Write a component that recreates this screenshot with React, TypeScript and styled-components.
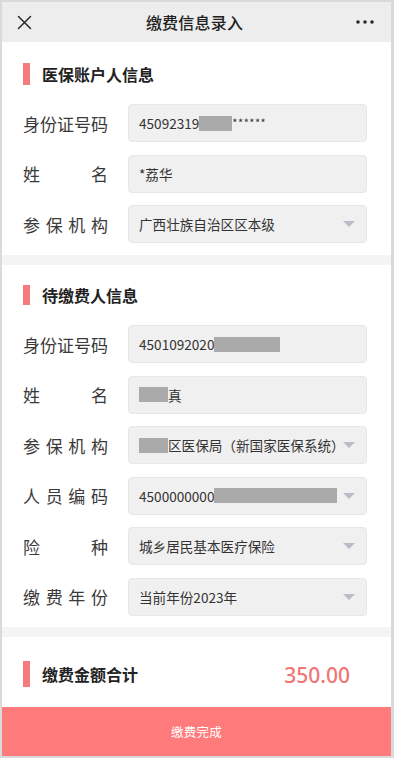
import styled, { createGlobalStyle } from 'styled-components'

const GlobalStyle = createGlobalStyle`
  html, body {
    margin: 0;
    padding: 0;
    background: #ffffff;
  }
  body {
    font-family: "Noto Sans CJK SC", "Noto Sans", sans-serif;
    color: #333333;
  }
  * {
    box-sizing: border-box;
  }
`

const Frame = styled.div`
  width: 394px;
  height: 758px;
  border: 2px solid #dadada;
  border-right-width: 3px;
  display: flex;
  flex-direction: column;
  background: #ffffff;
  overflow: hidden;
`

const NavBar = styled.header`
  height: 40px;
  flex: none;
  background: #ededed;
  display: flex;
  align-items: center;
  justify-content: space-between;
  padding: 0 14px 0 10px;
`

const NavTitle = styled.h1`
  margin: 0;
  font-size: 16px;
  font-weight: 500;
  color: #222222;
  letter-spacing: 0.2px;
`

const IconButton = styled.button`
  width: 24px;
  height: 24px;
  padding: 0;
  border: 0;
  background: none;
  display: flex;
  align-items: center;
  justify-content: center;
  color: #2a2a2a;
`

const Section = styled.section<{ $top: number; $bottom: number }>`
  background: #ffffff;
  padding: ${(p) => p.$top}px 24px ${(p) => p.$bottom}px 21px;
  display: flex;
  flex-direction: column;
`

const Divider = styled.div`
  height: 10px;
  flex: none;
  background: #f4f4f4;
`

const SectionTitle = styled.div<{ $bar: number }>`
  display: flex;
  align-items: center;
  gap: 12px;
  height: ${(p) => p.$bar}px;
  font-size: 16px;
  font-weight: 700;
  color: #222222;
  &::before {
    content: '';
    width: 7px;
    height: ${(p) => p.$bar}px;
    background: #f57b7b;
    flex: none;
  }
`

const Rows = styled.div<{ $top: number }>`
  display: flex;
  flex-direction: column;
  gap: 12.5px;
  margin-top: ${(p) => p.$top}px;
`

const Row = styled.div`
  display: flex;
  align-items: center;
  gap: 20px;
`

const Label = styled.span`
  width: 85px;
  flex: none;
  font-size: 17px;
  color: #3a3a3a;
  text-align: justify;
  text-align-last: justify;
  white-space: nowrap;
`

const Field = styled.div<{ $select?: boolean }>`
  position: relative;
  flex: 1;
  height: 38px;
  background: #f0f0f0;
  border: 1px solid #e7e7e7;
  border-radius: 4px;
  display: flex;
  align-items: center;
  padding: 0 ${(p) => (p.$select ? 26 : 10)}px 0 10px;
  font-size: 13.6px;
  color: #333333;
  white-space: nowrap;
  overflow: hidden;
`

const Caret = styled.span`
  position: absolute;
  right: 11px;
  top: 50%;
  margin-top: -3px;
  width: 0;
  height: 0;
  border-left: 6px solid transparent;
  border-right: 6px solid transparent;
  border-top: 6px solid #bcbcc7;
`

const Mask = styled.span<{ $w: number }>`
  display: inline-block;
  width: ${(p) => p.$w}px;
  height: 15px;
  background: #aaaaaa;
  flex: none;
`

const Stars = styled.span`
  font-size: 11px;
  letter-spacing: 0.5px;
  align-self: flex-start;
  margin-top: 9px;
`

const TotalRow = styled.div`
  display: flex;
  align-items: center;
  justify-content: space-between;
  padding-right: 17px;
`

const Amount = styled.span`
  font-family: "Noto Sans", "Open Sans", sans-serif;
  font-size: 21px;
  font-weight: 500;
  color: #f07676;
  margin-top: 2px;
`

const SubmitButton = styled.button`
  flex: 1;
  border: 0;
  background: #ff7b7b;
  color: #ffffff;
  font-family: "Noto Sans CJK SC", sans-serif;
  font-size: 12.5px;
  letter-spacing: 0.3px;
`

type FieldRow = {
  label: string
  value: React.ReactNode
  select?: boolean
}

const accountRows: FieldRow[] = [
  {
    label: '身份证号码',
    value: (
      <>
        45092319
        <Mask $w={33} />
        <Stars>******</Stars>
      </>
    ),
  },
  { label: '姓名', value: '*荔华' },
  { label: '参保机构', value: '广西壮族自治区区本级', select: true },
]

const payerRows: FieldRow[] = [
  {
    label: '身份证号码',
    value: (
      <>
        4501092020
        <Mask $w={66} />
      </>
    ),
  },
  {
    label: '姓名',
    value: (
      <>
        <Mask $w={29} />真
      </>
    ),
  },
  {
    label: '参保机构',
    value: (
      <>
        <Mask $w={29} />区医保局（新国家医保系统）
      </>
    ),
    select: true,
  },
  {
    label: '人员编码',
    value: (
      <>
        4500000000
        <Mask $w={123} />
      </>
    ),
    select: true,
  },
  { label: '险种', value: '城乡居民基本医疗保险', select: true },
  { label: '缴费年份', value: '当前年份2023年', select: true },
]

function FieldList({ rows, top }: { rows: FieldRow[]; top: number }) {
  return (
    <Rows $top={top}>
      {rows.map((r, i) => (
        <Row key={i}>
          <Label>{r.label}</Label>
          <Field $select={r.select}>
            {r.value}
            {r.select && <Caret />}
          </Field>
        </Row>
      ))}
    </Rows>
  )
}

export default function App() {
  return (
    <>
      <GlobalStyle />
      <Frame>
        <NavBar>
          <IconButton aria-label="关闭">
            <svg width="15" height="15" viewBox="0 0 15 15">
              <path d="M1.5 1.5 L13.5 13.5 M13.5 1.5 L1.5 13.5" stroke="currentColor" strokeWidth="1.5" strokeLinecap="round" />
            </svg>
          </IconButton>
          <NavTitle>缴费信息录入</NavTitle>
          <IconButton aria-label="更多">
            <svg width="20" height="6" viewBox="0 0 20 6">
              <circle cx="3" cy="3" r="1.8" fill="currentColor" />
              <circle cx="10" cy="3" r="1.8" fill="currentColor" />
              <circle cx="17" cy="3" r="1.8" fill="currentColor" />
            </svg>
          </IconButton>
        </NavBar>

        <Section $top={21} $bottom={12}>
          <SectionTitle $bar={22}>医保账户人信息</SectionTitle>
          <FieldList rows={accountRows} top={19} />
        </Section>
        <Divider />

        <Section $top={20} $bottom={11}>
          <SectionTitle $bar={20}>待缴费人信息</SectionTitle>
          <FieldList rows={payerRows} top={20} />
        </Section>
        <Divider />

        <Section $top={22} $bottom={18}>
          <TotalRow>
            <SectionTitle $bar={26}>缴费金额合计</SectionTitle>
            <Amount>350.00</Amount>
          </TotalRow>
        </Section>

        <SubmitButton>缴费完成</SubmitButton>
      </Frame>
    </>
  )
}
